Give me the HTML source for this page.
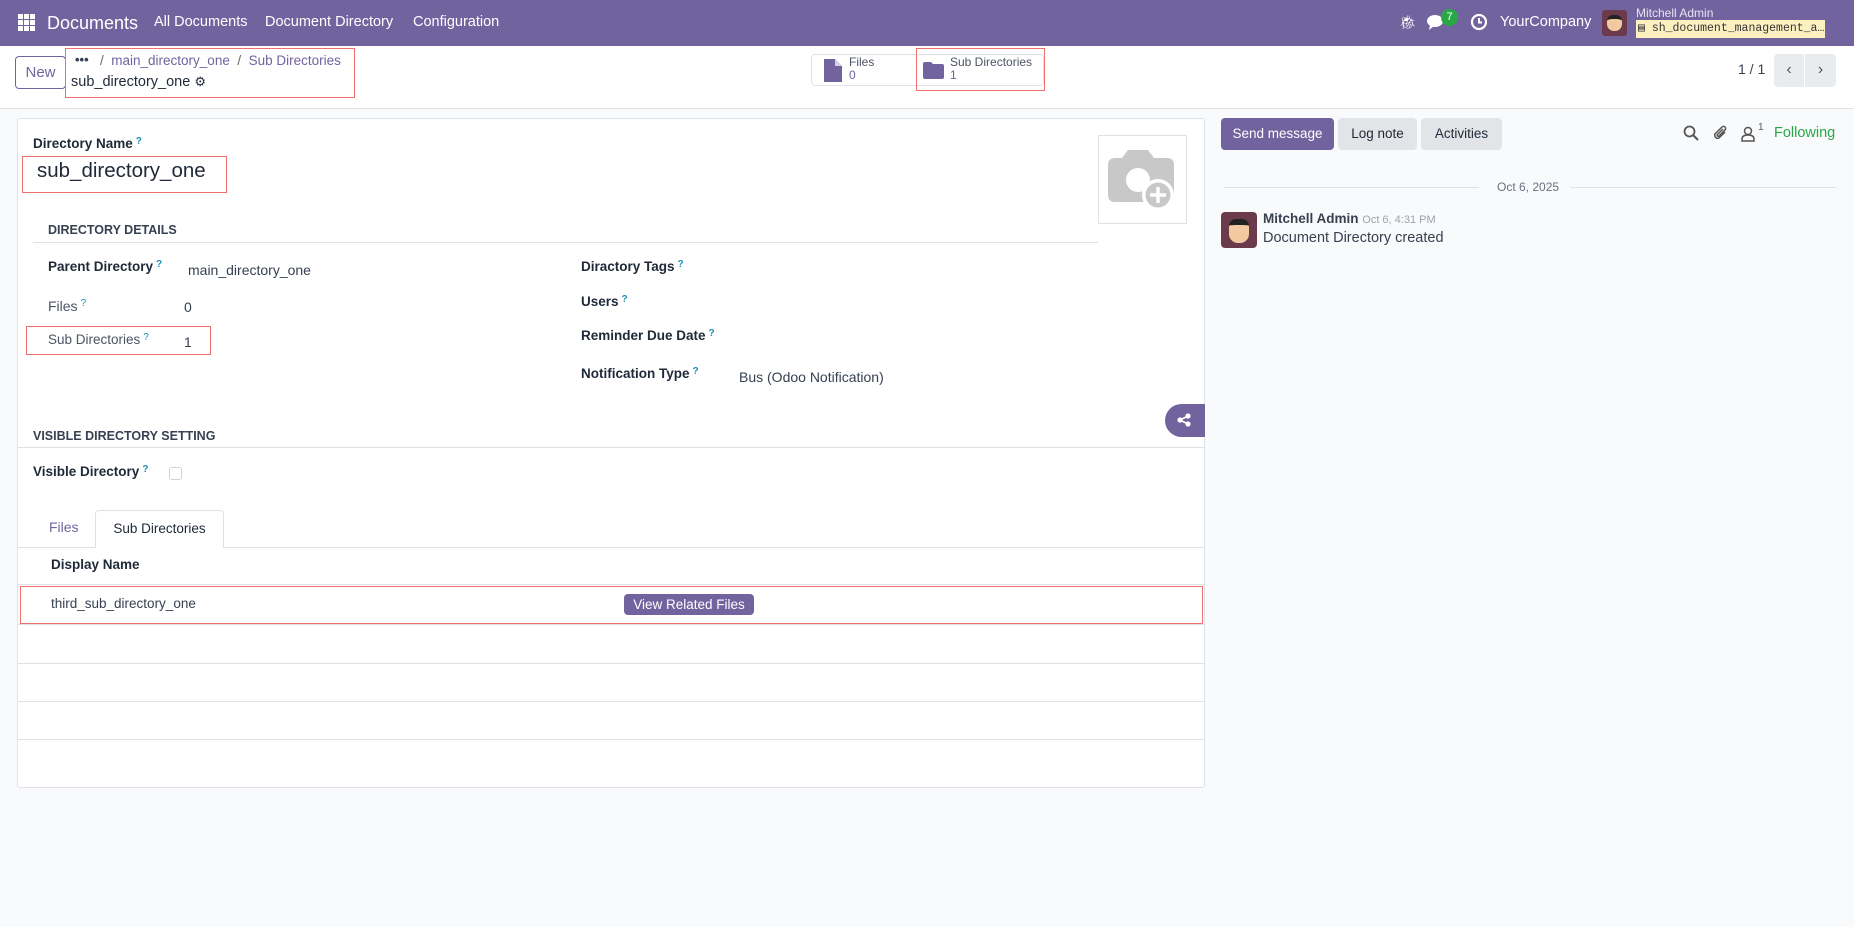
<!DOCTYPE html>
<html><head><meta charset="utf-8"><style>
*{box-sizing:border-box;margin:0;padding:0}
body{width:1854px;height:927px;overflow:hidden;background:#f9fafb;font-family:"Liberation Sans",sans-serif;font-size:14px;color:#374151;position:relative}
.a{position:absolute;white-space:nowrap}
.nav{position:absolute;left:0;top:0;width:1854px;height:46px;background:#71639e;color:#fff}
.cp{position:absolute;left:0;top:46px;width:1854px;height:63px;background:#fff;border-bottom:1px solid #dee2e6}
.red{position:absolute;border:1.5px solid #f07070}
.sheet{position:absolute;left:17px;top:118px;width:1188px;height:670px;background:#fff;border:1px solid #dee2e6;border-radius:3px}
.lbl{font-weight:bold;color:#1f2937;font-size:13.5px}
.q{color:#1f8fb5;font-size:10px;vertical-align:top;margin-left:3px}
.hr{position:absolute;height:1px;background:#dee2e6}
.btn{position:absolute;border-radius:4px;font-size:14px;text-align:center;font-weight:bold}
</style></head><body>
<div class="nav">
  <svg class="a" style="left:18px;top:14px" width="17" height="17" viewBox="0 0 17 17" fill="#fff"><rect x="0" y="0" width="5" height="5"/><rect x="6" y="0" width="5" height="5"/><rect x="12" y="0" width="5" height="5"/><rect x="0" y="6" width="5" height="5"/><rect x="6" y="6" width="5" height="5"/><rect x="12" y="6" width="5" height="5"/><rect x="0" y="12" width="5" height="5"/><rect x="6" y="12" width="5" height="5"/><rect x="12" y="12" width="5" height="5"/></svg>
  <div class="a" style="left:47px;top:13px;font-size:18px">Documents</div>
  <div class="a" style="left:154px;top:14px;font-size:14.5px">All Documents</div>
  <div class="a" style="left:265px;top:14px;font-size:14.5px">Document Directory</div>
  <div class="a" style="left:413px;top:14px;font-size:14.5px">Configuration</div>
  <div class="a" style="left:1399px;top:14px;font-size:14px">🐞︎</div>
  <svg class="a" style="left:1427px;top:14px" width="20" height="17" viewBox="0 0 20 17" fill="#fff"><ellipse cx="8" cy="7" rx="8" ry="6"/><path d="M3 11 L2 16 L7 12Z"/></svg>
  <div class="a" style="left:1441px;top:9px;width:17px;height:17px;border-radius:9px;background:#28a745;font-size:11px;text-align:center;line-height:17px">7</div>
  <svg class="a" style="left:1470px;top:13px" width="18" height="18" viewBox="0 0 18 18"><circle cx="9" cy="9" r="7" fill="none" stroke="#fff" stroke-width="2.2"/><path d="M9 5v4.5h3" stroke="#fff" stroke-width="2" fill="none"/></svg>
  <div class="a" style="left:1500px;top:14px;font-size:14.5px">YourCompany</div>
  <div class="a" style="left:1602px;top:10px;width:25px;height:26px;border-radius:3px;background:#6b3b4c"><div style="margin:5px 5px;width:15px;height:16px;background:#f2c9a0;border-radius:6px 6px 7px 7px;border-top:4px solid #222"></div></div>
  <div class="a" style="left:1636px;top:6px;font-size:12px;color:#e8e4f2">Mitchell Admin</div>
  <div class="a" style="left:1636px;top:20px;width:189px;height:18px;overflow:hidden;background:#fdf0c0;color:#333;font-family:'Liberation Mono',monospace;font-size:11.5px;line-height:18px;padding-left:2px">▤ sh_document_management_a…</div>
</div>
<div class="cp">
  <div class="btn" style="left:15px;top:10px;width:51px;height:33px;border:1px solid #71639e;color:#71639e;font-weight:normal;line-height:31px;font-size:15px">New</div>
  <div class="a" style="left:75px;top:6px;font-size:13px;color:#374151;font-weight:bold">•••</div>
  <div class="a" style="left:100px;top:7px;font-size:13.5px;color:#71639e"><span style="color:#666">/</span>&nbsp; main_directory_one &nbsp;<span style="color:#666">/</span>&nbsp; Sub Directories</div>
  <div class="a" style="left:71px;top:28px;font-size:14.5px;color:#1f2937">sub_directory_one <span style="font-size:13px">⚙</span></div>
  <div class="a" style="left:811px;top:8px;width:233px;height:32px;border:1px solid #dee2e6;border-radius:4px"></div>
  <svg class="a" style="left:824px;top:13px" width="18" height="23" viewBox="0 0 18 23"><path d="M0 0h11l7 7v16H0Z" fill="#71639e"/><path d="M11 0v7h7" fill="#fff" opacity=".7"/></svg>
  <div class="a" style="left:849px;top:10px;font-size:12px;color:#4b5563;line-height:13px">Files<br><span style="color:#71639e">0</span></div>
  <svg class="a" style="left:923px;top:16px" width="21" height="17" viewBox="0 0 21 17"><path d="M0 2q0-2 2-2h6l2 2h9q2 0 2 2v11q0 2-2 2H2q-2 0-2-2Z" fill="#71639e"/></svg>
  <div class="a" style="left:950px;top:10px;font-size:12px;color:#4b5563;line-height:13px">Sub Directories<br><span style="color:#71639e">1</span></div>
  <div class="a" style="left:1738px;top:15px;font-size:14px">1 / 1</div>
  <div class="a" style="left:1774px;top:8px;width:30px;height:33px;background:#e9ecef;border-radius:4px 0 0 4px;text-align:center;line-height:32px;font-size:16px;color:#555">‹</div>
  <div class="a" style="left:1805px;top:8px;width:31px;height:33px;background:#e9ecef;border-radius:0 4px 4px 0;text-align:center;line-height:32px;font-size:16px;color:#555">›</div>
</div>
<div class="red" style="left:65px;top:48px;width:290px;height:50px"></div>
<div class="red" style="left:916px;top:48px;width:129px;height:43px"></div>

<div class="sheet"></div>
<div class="a lbl" style="left:33px;top:136px">Directory Name<span class="q">?</span></div>
<div class="red" style="left:22px;top:156px;width:205px;height:37px"></div>
<div class="a" style="left:37px;top:159px;font-size:20.5px;color:#1f2937">sub_directory_one</div>
<div class="a" style="left:1098px;top:135px;width:89px;height:89px;border:1px solid #dee2e6"></div>
<svg class="a" style="left:1108px;top:150px" width="70" height="62" viewBox="0 0 70 62"><path d="M20 0h20l6 8h13q7 0 7 7v30q0 7-7 7H7q-7 0-7-7V15q0-7 7-7h7Z" fill="#c8c8c8"/><circle cx="30" cy="30" r="12" fill="#fff"/><circle cx="50" cy="45" r="16" fill="#fff"/><circle cx="50" cy="45" r="12.5" fill="#c8c8c8"/><path d="M50 37v16M42 45h16" stroke="#fff" stroke-width="3.5"/></svg>

<div class="a lbl" style="left:48px;top:223px;font-size:12.5px;color:#374151">DIRECTORY DETAILS</div>
<div class="hr" style="left:33px;top:242px;width:1065px"></div>
<div class="a lbl" style="left:48px;top:259px">Parent Directory<span class="q">?</span></div>
<div class="a" style="left:188px;top:262px">main_directory_one</div>
<div class="a" style="left:48px;top:298px;color:#4b5563">Files<span class="q">?</span></div>
<div class="a" style="left:184px;top:299px">0</div>
<div class="red" style="left:26px;top:326px;width:185px;height:29px"></div>
<div class="a" style="left:48px;top:332px;color:#4b5563;font-size:13.5px">Sub Directories<span class="q">?</span></div>
<div class="a" style="left:184px;top:334px">1</div>
<div class="a lbl" style="left:581px;top:259px">Diractory Tags<span class="q">?</span></div>
<div class="a lbl" style="left:581px;top:294px">Users<span class="q">?</span></div>
<div class="a lbl" style="left:581px;top:328px">Reminder Due Date<span class="q">?</span></div>
<div class="a lbl" style="left:581px;top:366px">Notification Type<span class="q">?</span></div>
<div class="a" style="left:739px;top:369px">Bus (Odoo Notification)</div>
<div class="a" style="left:1165px;top:404px;width:40px;height:33px;background:#71639e;border-radius:17px 0 0 17px"></div>
<svg class="a" style="left:1177px;top:413px" width="14" height="14" viewBox="0 0 14 14" fill="#fff"><circle cx="3" cy="7" r="2.6"/><circle cx="11" cy="3" r="2.6"/><circle cx="11" cy="11" r="2.6"/><path d="M3 7L11 3M3 7L11 11" stroke="#fff" stroke-width="1.6"/></svg>

<div class="a lbl" style="left:33px;top:429px;font-size:12.5px;color:#374151">VISIBLE DIRECTORY SETTING</div>
<div class="hr" style="left:18px;top:447px;width:1186px"></div>
<div class="a lbl" style="left:33px;top:464px">Visible Directory<span class="q">?</span></div>
<div class="a" style="left:169px;top:467px;width:13px;height:13px;border:1px solid #ced4da;border-radius:3px"></div>
<div class="a" style="left:49px;top:519px;color:#71639e">Files</div>
<div class="a" style="left:95px;top:510px;width:129px;height:38px;background:#fff;border:1px solid #dee2e6;border-bottom:none;border-radius:4px 4px 0 0;text-align:center;line-height:36px;color:#1f2937;font-size:13.5px">Sub Directories</div>
<div class="hr" style="left:18px;top:547px;width:77px"></div>
<div class="hr" style="left:224px;top:547px;width:980px"></div>
<div class="a lbl" style="left:51px;top:557px">Display Name</div>
<div class="hr" style="left:18px;top:584px;width:1186px"></div>
<div class="red" style="left:20px;top:586px;width:1183px;height:38px"></div>
<div class="a" style="left:51px;top:596px;font-size:13.5px">third_sub_directory_one</div>
<div class="btn" style="left:624px;top:594px;width:130px;height:21px;background:#71639e;color:#fff;font-weight:normal;line-height:21px;font-size:13.5px">View Related Files</div>
<div class="hr" style="left:18px;top:624px;width:1186px"></div>
<div class="hr" style="left:18px;top:663px;width:1186px"></div>
<div class="hr" style="left:18px;top:701px;width:1186px"></div>
<div class="hr" style="left:18px;top:739px;width:1186px"></div>

<div class="btn" style="left:1221px;top:118px;width:113px;height:32px;background:#71639e;color:#fff;line-height:32px;font-weight:normal;font-size:13.5px">Send message</div>
<div class="btn" style="left:1338px;top:118px;width:79px;height:32px;background:#e2e4e8;color:#1f2937;line-height:32px;font-weight:normal;font-size:13.5px">Log note</div>
<div class="btn" style="left:1421px;top:118px;width:81px;height:32px;background:#e2e4e8;color:#1f2937;line-height:32px;font-weight:normal;font-size:13.5px">Activities</div>
<svg class="a" style="left:1683px;top:125px" width="16" height="16" viewBox="0 0 16 16"><circle cx="6.5" cy="6.5" r="5" fill="none" stroke="#555" stroke-width="1.8"/><path d="M10 10l5 5" stroke="#555" stroke-width="2"/></svg>
<svg class="a" style="left:1713px;top:124px" width="16" height="18" viewBox="0 0 16 18"><path d="M12 8L6 14a3 3 0 0 1-4-4l7-7a2 2 0 0 1 3 3L6 12a1 1 0 0 1-1.5-1.5L10 5" fill="none" stroke="#555" stroke-width="1.5"/></svg>
<svg class="a" style="left:1741px;top:126px" width="14" height="16" viewBox="0 0 14 16"><circle cx="7" cy="5" r="3.5" fill="none" stroke="#555" stroke-width="1.5"/><path d="M1 15v-2q0-4 6-4t6 4v2Z" fill="none" stroke="#555" stroke-width="1.5"/></svg>
<div class="a" style="left:1758px;top:122px;font-size:10px;color:#555">1</div>
<div class="a" style="left:1774px;top:125px;font-size:14.5px;color:#28a745">Following</div>
<div class="hr" style="left:1224px;top:187px;width:255px"></div>
<div class="hr" style="left:1570px;top:187px;width:266px"></div>
<div class="a" style="left:1497px;top:180px;font-size:12px;color:#6b7280">Oct 6, 2025</div>
<div class="a" style="left:1221px;top:212px;width:36px;height:36px;border-radius:4px;background:#6b3b4c"><div style="margin:7px 8px;width:20px;height:24px;background:#f2c9a0;border-radius:7px 7px 9px 9px;border-top:6px solid #222"></div></div>
<div class="a" style="left:1263px;top:211px;font-weight:bold;color:#374151;font-size:13.5px">Mitchell Admin <span style="font-weight:normal;font-size:11px;color:#9ca3af">Oct 6, 4:31 PM</span></div>
<div class="a" style="left:1263px;top:230px;font-size:14.5px;color:#374151">Document Directory created</div>
</body></html>
